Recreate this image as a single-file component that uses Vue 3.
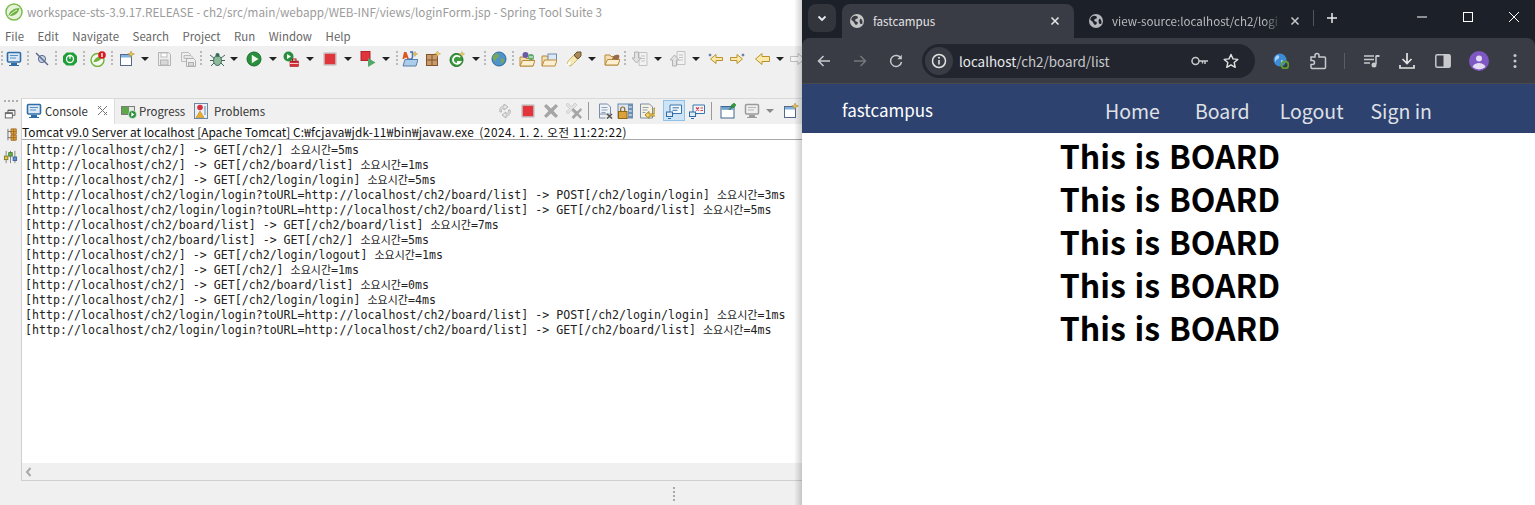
<script setup>
const I = {
  monitor: '<rect x="1.500" y="1.500" width="13" height="9.500" rx="1" fill="#dbe9f6" stroke="#2f6da8" stroke-width="1.600"/><path d="M4 4.500h8M4 7h6" stroke="#5a8fc0"/><path d="M5 12h6v2H5z" fill="#2f6da8"/><path d="M3 14.500h10" stroke="#2f6da8"/>',
  pin: '<circle cx="8" cy="8" r="3.600" fill="#c9d2e4" stroke="#56688c"/><path d="M2 2l12 12" stroke="#56688c" stroke-width="1.400"/>',
  boot: '<path d="M4.500 1.500h7l3.500 3.500v6l-3.500 3.500h-7l-3.500-3.500v-6z" fill="#1e9e36"/><circle cx="8" cy="8" r="3.500" fill="none" stroke="#fff" stroke-width="1.300"/><path d="M8 3.800v4" stroke="#fff" stroke-width="1.300"/>',
  spring: '<circle cx="7.500" cy="9" r="6.500" fill="#f5f8ee" stroke="#6fb33c" stroke-width="1.400"/><path d="M3.500 11c1-4 5-6 9-6-1 4-5 6-9 6z" fill="#6fb33c"/><circle cx="12" cy="4" r="3.800" fill="#d9191f"/><path d="M12 2v4" stroke="#fff" stroke-width="1.400"/>',
  newwin: '<rect x="1.500" y="3.500" width="11" height="11" fill="#fff" stroke="#56688c"/><rect x="2" y="4" width="10" height="2.500" fill="#7fb2dd"/><path d="M12 0l1 2.200L15.500 3l-2.500 1-1 2.300L11 4 8.700 3l2.300-.8z" fill="#e6c25a" stroke="#a88a2d" stroke-width=".5"/>',
  save: '<path d="M2.500 1.500h10l2 2v11h-12z" fill="#efefef" stroke="#b4b4b4"/><rect x="5" y="2" width="6" height="4" fill="#fff" stroke="#bdbdbd"/><rect x="4.500" y="9" width="7.500" height="5" fill="#d9d9d9" stroke="#b4b4b4"/>',
  saveall: '<path d="M1.500 1.500h7l2 2v7h-9z" fill="#efefef" stroke="#bcbcbc"/><path d="M4 4.500h7l2 2v1h-9z" fill="#e8e8e8" stroke="#bcbcbc"/><path d="M6.500 7.500h7l2 2v6h-9z" fill="#efefef" stroke="#b0b0b0"/><rect x="8.500" y="11.500" width="5" height="3.500" fill="#d9d9d9" stroke="#b0b0b0"/>',
  bug: '<ellipse cx="8.500" cy="9.500" rx="4" ry="5" fill="#8fb79a" stroke="#3a6b58"/><circle cx="8.500" cy="4" r="2" fill="#3a6b58"/><path d="M1 4l4 3M1 9.500h3.500M2 15l3-3M16 4l-4 3M16 9.500h-3.500M15 15l-3-3" stroke="#3a6b58"/>',
  run: '<circle cx="8" cy="8" r="7" fill="#2a8f3d" stroke="#1b6d30"/><path d="M5.800 3.800L12.500 8l-6.700 4.200z" fill="#f2f8ef"/>',
  runext: '<circle cx="5.500" cy="5.500" r="5" fill="#2a8f3d"/><path d="M4 3l4 2.500L4 8z" fill="#fff"/><rect x="7" y="10" width="8.500" height="5.500" fill="#d6303a" stroke="#9c1c24" stroke-width=".6"/><rect x="9.500" y="8" width="3.500" height="2.500" fill="none" stroke="#9c1c24"/><path d="M7 12.500h8.500" stroke="#f6c6c8"/>',
  stop: '<rect x="2" y="2" width="12" height="12" rx=".5" fill="#e0353b" stroke="#c7c7c7" stroke-width="1.500"/>',
  stopred: '<rect x="1" y="0.500" width="9" height="9" fill="#e0353b" stroke="#b1252b"/><path d="M8 7l7.500 4.500L8 16z" fill="#54a66a"/>',
  aj: '<path d="M1 15l2-6.500h13L14 15z" fill="#a9cdeb" stroke="#587fa6"/><path d="M2 1h2.400L7 8H5.200l-.4-1.300H2.600L2.200 8H.5z" fill="#d9561e"/><path d="M8 1h2.500v5c0 2-2 2.400-3.500 2" fill="none" stroke="#3a6fc4" stroke-width="1.500"/><path d="M13 .500l.8 1.800 1.800.7-1.800.7-.8 1.800-.8-1.800-1.800-.7 1.800-.7z" fill="#e6c25a" stroke="#a88a2d" stroke-width=".4"/>',
  pkg: '<rect x="1.500" y="3.500" width="11" height="11" fill="#c99a6b" stroke="#80552e"/><path d="M1.500 9h11M7 3.500v11" stroke="#80552e"/><path d="M12.500 0l.9 2 2.100.8-2.100.8-.9 2-.9-2-2.100-.8 2.100-.8z" fill="#f2d263" stroke="#a88a2d" stroke-width=".4"/>',
  g2: '<circle cx="7.500" cy="9" r="6.500" fill="#3a9b3d" stroke="#23702a"/><path d="M11 6.200A4 4 0 1 0 11.300 11H8" fill="none" stroke="#fff" stroke-width="1.800"/><path d="M13 .500l.8 1.800 1.800.7-1.800.7-.8 1.800-.8-1.800-1.800-.7 1.800-.7z" fill="#f2d263" stroke="#a88a2d" stroke-width=".4"/>',
  globe: '<circle cx="8" cy="8" r="7" fill="#4f93c9" stroke="#2c6a9c"/><path d="M4 3c2-1 4 0 4 2s-3 2-3 4-2 1-3-1 0-4 2-5zM10 8c2-1 3.500 0 3 2s-2 3-3 2 0-3 0-4z" fill="#75a85a"/>',
  folderg: '<path d="M1 15V6h5l1 1.500h7V15z" fill="#f6dfae" stroke="#b88a3c"/><path d="M1 15l2.500-5.500H16L14 15z" fill="#fcefcf" stroke="#b88a3c"/><circle cx="6.500" cy="4" r="3" fill="#6b5aa8"/><circle cx="12" cy="6" r="3" fill="#5aa86b"/><path d="M10 6h4" stroke="#fff"/>',
  folder: '<path d="M1 15V5h5l1 1.500h2" fill="#f6dfae" stroke="#b88a3c"/><rect x="7" y="3" width="8.500" height="6.500" fill="#dce8f4" stroke="#6c8cae"/><path d="M1 15l2.500-6H16L14 15z" fill="#fcefcf" stroke="#b88a3c"/>',
  pen: '<path d="M2.500 14.500c-2-2-1-4 1-6l4-4 4 4-4 4c-2 2-3 3-5 2z" fill="#f4e8b4" stroke="#c9b467"/><path d="M8 4l3-3 4 0v4l-3 3z" fill="#a88a5a" stroke="#6b5530"/><path d="M1.500 14.500l3-4" stroke="#fff" stroke-width="2"/>',
  folderb: '<path d="M1 14V4h5l1 1.500h7V14z" fill="#f6dfae" stroke="#b88a3c"/><path d="M1 14l2.500-5.500H16L14 14z" fill="#fcefcf" stroke="#b88a3c"/><path d="M8 8c1-4 4-5 7-4 1 2 0 4-2 5z" fill="#9a6b4a"/>',
  annDown: '<path d="M7 1.500h8v13H7z" fill="#f2f2f2" stroke="#c2c2c2"/><path d="M9 5h4M9 7.500h4M9 10h4" stroke="#c2c2c2"/><path d="M2.500 1h4v6h2.500l-4.500 5-4.500-5h2.500z" fill="#e2e2e2" stroke="#b2b2b2"/>',
  annUp: '<path d="M7 .500h8v13H7z" fill="#f2f2f2" stroke="#c2c2c2"/><path d="M9 4h4M9 6.500h4M9 9h4" stroke="#c2c2c2"/><path d="M2.500 15h4V9h2.500L4.500 4 0 9h2.500z" fill="#e2e2e2" stroke="#b2b2b2"/>',
  backStar: '<path d="M15.500 6.500H9V3.500L3.500 8 9 12.500v-3h6.500z" fill="#fbe9a8" stroke="#b9922d"/><path d="M3 2l.5 1.500L5 4l-1.500.5L3 6l-.5-1.500L1 4l1.500-.5z" fill="#2a4a8a"/>',
  fwdStar: '<path d="M.5 6.500H7V3.500L12.500 8 7 12.500v-3H.5z" fill="#fbe9a8" stroke="#b9922d"/><path d="M13 2l.5 1.500L15 4l-1.500.5L13 6l-.5-1.500L11 4l1.500-.5z" fill="#2a4a8a"/>',
  back: '<path d="M15.500 5.500H8V2.500L1.500 8 8 13.500v-3h7.500z" fill="#fbe9a8" stroke="#b9922d"/>',
  fwdGray: '<path d="M.5 5.500H8V2.500L14.500 8 8 13.500v-3H.5z" fill="#f4f4f4" stroke="#bdbdbd"/>',
  sync: '<path d="M3 9c-1-3 1-6 4-6V1l4 3-4 3V5c-2 0-3 2-2.500 4zM13 7c1 3-1 6-4 6v2l-4-3 4-3v2c2 0 3-2 2.500-4z" fill="#e4e4e4" stroke="#b5b5b5"/>',
  x: '<path d="M3.200 1L8 5.500 12.800 1 15 3.300 10.500 8l4.500 4.700-2.200 2.300L8 10.500 3.200 15 1 12.700 5.500 8 1 3.300z" fill="#a5a5a5"/>',
  xx: '<path d="M1.500 0L5.500 3.500 9 0l2 2-3.500 3.500L11 9 9 11 5.500 7.500 2 11 0 9l3.500-3.500L0 2z" fill="#e3e3e3" stroke="#bdbdbd" stroke-width=".6"/><path d="M7.200 5L11 8.500 14.800 5l1.200 2-3.500 3.500L16 14l-1.500 2-3.500-3.500L7.500 16 5.500 14 9 10.500 5.500 7z" fill="#a5a5a5"/>',
  docx: '<path d="M2.500 1h8l3 3v7h-11zM2.500 11v4h6" fill="#eef3f9" stroke="#7b8ea8"/><path d="M4.500 4.500h6M4.500 7h6M4.500 9.500h4" stroke="#8fa3bc"/><path d="M10 11l5 4.500M15 11l-5 4.500" stroke="#555" stroke-width="1.600"/>',
  lock: '<rect x="1" y="1" width="14.500" height="14" fill="#dbe6f2" stroke="#6c87a6"/><rect x="11" y="1" width="4.500" height="14" fill="#6e8fb3"/><path d="M11.800 4h3M11.800 8h3M11.800 12h3" stroke="#fff"/><rect x="1.500" y="8.500" width="8.500" height="7" fill="#dba23a" stroke="#8f6518"/><path d="M3.700 8.500V6a2 2 0 0 1 4 0v2.500" fill="none" stroke="#8f6518" stroke-width="1.200"/>',
  docarrow: '<path d="M1.500 1h9l3 3v11h-12z" fill="#f7f2df" stroke="#7b8ea8"/><path d="M3.500 4.500h6M3.500 7h5M3.500 9.500h3" stroke="#8fa3bc"/><path d="M15 5v6H10V8.500L6 12l4 3.500V13h6.500V5z" fill="#f6d76b" stroke="#a88221"/>',
  chat: '<path d="M4 2h11.500v8.500H7v1H4z" fill="#f4f8fc" stroke="#3a76ad"/><path d="M6.500 4.800h6.500M6.500 7.300h5" stroke="#3a76ad"/><rect x=".5" y="9" width="6" height="4.500" fill="#dfeaf5" stroke="#2f6da8"/><path d="M2 15.500h3" stroke="#2f6da8"/>',
  chatx: '<path d="M4 2h11.500v8.500H7v1H4z" fill="#f4f8fc" stroke="#3a76ad"/><path d="M7 4.500l3 3M10 4.500l-3 3" stroke="#d63a3f" stroke-width="1.400"/><path d="M11.500 5h2.500M11.500 7.500h2.500" stroke="#d63a3f"/><rect x=".5" y="9" width="6" height="4.500" fill="#dfeaf5" stroke="#2f6da8"/><path d="M2 15.500h3" stroke="#2f6da8"/>',
  pinwin: '<rect x="1" y="3.500" width="13" height="11.500" fill="#fff" stroke="#42648e"/><rect x="1.500" y="4" width="12" height="2.800" fill="#6f9fcb"/><path d="M9 6.500l3-3-1-1 3-2.500 2 2-2.500 3-1-1-3 3z" fill="#2e9e3a" stroke="#1d6d28" stroke-width=".5"/>',
  grayMon: '<rect x="1.500" y="1.500" width="13" height="9.500" rx="1" fill="#efefef" stroke="#9b9b9b" stroke-width="1.500"/><path d="M4 4.500h8M4 7h6" stroke="#b5b5b5"/><path d="M5 12h6v2H5z" fill="#9b9b9b"/><path d="M3 14.500h10" stroke="#9b9b9b"/>',
  progress: '<rect x=".5" y="3.500" width="13" height="8" fill="#e8e8e8" stroke="#7b7b7b"/><rect x="1" y="4" width="7" height="7" fill="#5fa64a"/><circle cx="11.500" cy="11.500" r="4" fill="#2a8f3d" stroke="#fff" stroke-width=".6"/><path d="M10.300 9.300l3.200 2.200-3.200 2.200z" fill="#fff"/>',
  problems: '<rect x="1.500" y=".5" width="13" height="15" fill="#eaf0f7" stroke="#6e87a5"/><circle cx="7" cy="4.500" r="2.800" fill="#d6303a"/><path d="M7 8l4 6.500H3z" fill="#e9ad2f" stroke="#a97c14" stroke-width=".5"/><path d="M12 3v9" stroke="#6e87a5"/>',
  rail1: '<rect x="1.500" y="6.500" width="8" height="6" fill="#fff" stroke="#555"/><path d="M4.500 6.500v-3h8v6h-3" fill="none" stroke="#555"/><path d="M4.500 4h8M2 7.500h7" stroke="#555"/>',
  rail2: '<path d="M4.500 1v13M4.500 4H8M4.500 11H8" stroke="#666" fill="none"/><path d="M8 1h6v6H8zM8 8h6v6H8z" fill="#e6a246" stroke="#9c6b1f"/><path d="M11 1v13M8 4h6M8 11h6" stroke="#9c6b1f"/>',
  rail3: '<path d="M3 1v14M8 1v14M13 1v14" stroke="#7a7a7a"/><rect x="1" y="7" width="4" height="4" fill="#e5c43e" stroke="#7a7a2a"/><rect x="6" y="3" width="4" height="4" fill="#6db24a" stroke="#3e7a25"/><rect x="11" y="8" width="4" height="4" fill="#5d8fd0" stroke="#305d99"/>'
}

// Items are listed with the x of their centre; the left margins follow from those.
const widths = { g: 2, d: 8, s: 1 }
function place(list, origin) {
  let right = origin
  return list.map(([k, c, on]) => {
    const w = on ? 22 : widths[k] || 16
    const left = c - w / 2
    const ml = left - right
    right = left + w
    return { k, ml, on }
  })
}

const mainBar = place([
  ['g', 2], ['monitor', 14], ['g', 28], ['pin', 42], ['g', 56], ['boot', 70], ['g', 84], ['spring', 98], ['g', 112],
  ['newwin', 127], ['d', 145], ['save', 164], ['saveall', 188], ['g', 201], ['bug', 217], ['d', 234], ['run', 254], ['d', 273],
  ['runext', 291], ['d', 310], ['stop', 330], ['d', 348], ['stopred', 368], ['d', 386], ['g', 397],
  ['aj', 410], ['pkg', 433], ['g2', 457], ['d', 476], ['g', 485], ['globe', 499], ['g', 513], ['folderg', 527], ['folder', 549],
  ['pen', 574], ['d', 592], ['folderb', 612], ['g', 625], ['annDown', 640], ['d', 658], ['annUp', 678], ['d', 696],
  ['backStar', 715], ['fwdStar', 738], ['back', 762], ['d', 780], ['fwdGray', 798]
], 0)

const viewBar = place([
  ['sync', 505], ['stop', 528], ['x', 551], ['xx', 574], ['s', 588], ['docx', 605], ['lock', 625], ['docarrow', 647],
  ['chat', 674, true], ['chatx', 697], ['s', 711], ['pinwin', 728], ['grayMon', 752], ['d', 770], ['newwin', 791]
], 505 - 8)

const menus = ['File', 'Edit', 'Navigate', 'Search', 'Project', 'Run', 'Window', 'Help']

const K = '소요시간'
const L = 'http://localhost/ch2/'
const LL = 'http://localhost/ch2/login/login?toURL=http://localhost/ch2/board/list'
const BL = 'http://localhost/ch2/board/list'
const lines = [
  `[${L}] -> GET[/ch2/] ${K}=5ms`,
  `[${L}] -> GET[/ch2/board/list] ${K}=1ms`,
  `[${L}] -> GET[/ch2/login/login] ${K}=5ms`,
  `[${LL}] -> POST[/ch2/login/login] ${K}=3ms`,
  `[${LL}] -> GET[/ch2/board/list] ${K}=5ms`,
  `[${BL}] -> GET[/ch2/board/list] ${K}=7ms`,
  `[${BL}] -> GET[/ch2/] ${K}=5ms`,
  `[${L}] -> GET[/ch2/login/logout] ${K}=1ms`,
  `[${L}] -> GET[/ch2/] ${K}=1ms`,
  `[${L}] -> GET[/ch2/board/list] ${K}=0ms`,
  `[${L}] -> GET[/ch2/login/login] ${K}=4ms`,
  `[${LL}] -> POST[/ch2/login/login] ${K}=1ms`,
  `[${LL}] -> GET[/ch2/board/list] ${K}=4ms`
].map((s) => s.split(K))

const boards = [1, 2, 3, 4, 5]
const navs = ['Home', 'Board', 'Logout', 'Sign in']
</script>

<template>
  <div class="root">
    <section class="ecl">
      <header class="ecl-title">
        <svg class="logo" width="18" height="18" viewBox="0 0 18 18">
          <circle cx="9" cy="9" r="8" fill="#e8f1dc" stroke="#7dbb4f" stroke-width="1.500" />
          <path d="M3.500 13c.5-5 5.500-8 11-8-1 5.500-5.500 8.500-11 8z" fill="#6db33f" />
          <path d="M4 13.500c2-3 5-5 8-6.500" stroke="#f2f7ea" fill="none" />
        </svg>
        <span>workspace-sts-3.9.17.RELEASE - ch2/src/main/webapp/WEB-INF/views/loginForm.jsp - Spring Tool Suite 3</span>
      </header>
      <nav class="ecl-menu">
        <span v-for="m in menus" :key="m">{{ m }}</span>
      </nav>
      <div class="bar">
        <template v-for="(b, n) in mainBar" :key="n">
          <i v-if="b.k === 'g'" class="grip" :style="{ marginLeft: b.ml + 'px' }"></i>
          <i v-else-if="b.k === 'd'" class="tri" :style="{ marginLeft: b.ml + 'px' }"></i>
          <svg v-else class="ic" :style="{ marginLeft: b.ml + 'px' }" width="16" height="16" viewBox="0 0 16 16" v-html="I[b.k]"></svg>
        </template>
      </div>
      <div class="work">
        <aside class="rail">
          <i class="hgrip"></i>
          <svg width="14" height="14" viewBox="0 0 16 16" v-html="I.rail1"></svg>
          <svg width="14" height="16" viewBox="0 0 16 16" v-html="I.rail2"></svg>
          <svg class="r3" width="15" height="14" viewBox="0 0 16 16" v-html="I.rail3"></svg>
        </aside>
        <div class="panel">
          <div class="tabs">
            <div class="tab on">
              <svg width="16" height="16" viewBox="0 0 16 16" v-html="I.monitor"></svg>
              <span>Console</span>
              <svg class="cl" width="11" height="11" viewBox="0 0 11 11"><path d="M1 1l9 9M10 1l-9 9M1 4l3-3M7 10l3-3" stroke="#777" fill="none" /></svg>
            </div>
            <div class="tab">
              <svg width="16" height="16" viewBox="0 0 16 16" v-html="I.progress"></svg>
              <span>Progress</span>
            </div>
            <div class="tab">
              <svg width="16" height="16" viewBox="0 0 16 16" v-html="I.problems"></svg>
              <span>Problems</span>
            </div>
            <div class="viewbar">
              <template v-for="(v, n) in viewBar" :key="n">
                <i v-if="v.k === 's'" class="vsep" :style="{ marginLeft: v.ml + 'px' }"></i>
                <i v-else-if="v.k === 'd'" class="tri gray" :style="{ marginLeft: v.ml + 'px' }"></i>
                <span v-else class="vslot" :class="{ sel: v.on }" :style="{ marginLeft: v.ml + 'px' }">
                  <svg width="16" height="16" viewBox="0 0 16 16" v-html="I[v.k]"></svg>
                </span>
              </template>
            </div>
          </div>
          <div class="info"><span class="i1">Tomcat v9.0 Server at localhost [Apache Tomcat] </span><span class="i2">C:₩fcjava₩jdk-11₩bin₩javaw.exe</span>&nbsp;&nbsp;<span class="i3">(2024. 1. 2. 오전 11:22:22)</span></div>
          <div class="console">
            <div v-for="(p, n) in lines" :key="n" class="ln">{{ p[0] }}<span class="ko">소요시간</span>{{ p[1] }}</div>
          </div>
          <div class="hscroll">
            <svg width="8" height="10" viewBox="0 0 8 10"><path d="M5.500 1L2 5l3.500 4" stroke="#a9a9a9" stroke-width="2" fill="none" /></svg>
          </div>
        </div>
      </div>
      <div class="foot"><i class="fgrip"></i></div>
      <div class="shade"></div>
    </section>

    <section class="chrome">
      <div class="strip">
        <button class="tablist">
          <svg width="12" height="12" viewBox="0 0 12 12"><path d="M2.500 4.500L6 8l3.500-3.500" stroke="#e8eaed" stroke-width="1.800" fill="none" /></svg>
        </button>
        <div class="ctab active">
          <svg class="glb" width="14" height="14" viewBox="0 0 16 16"><circle cx="8" cy="8" r="8" fill="#c4c7c5" /><path d="M3 3c3-2 6-1 6 1 0 2-3 1-3 3s3 1 3 3-2 3-3 2-1-3-3-4-2-3 0-5zM12 5c2 1 3 4 2 6-1 1-3 0-3-2s0-3 1-4z" fill="#3a3c45" /></svg>
          <span class="ctitle">fastcampus</span>
          <svg class="tx" width="10" height="10" viewBox="0 0 10 10"><path d="M1.500 1.500l7 7M8.500 1.500l-7 7" stroke="#e8eaed" stroke-width="1.500" /></svg>
        </div>
        <div class="ctab">
          <svg class="glb" width="14" height="14" viewBox="0 0 16 16"><circle cx="8" cy="8" r="8" fill="#b5b7bb" /><path d="M3 3c3-2 6-1 6 1 0 2-3 1-3 3s3 1 3 3-2 3-3 2-1-3-3-4-2-3 0-5zM12 5c2 1 3 4 2 6-1 1-3 0-3-2s0-3 1-4z" fill="#1c2028" /></svg>
          <span class="ctitle dim">view-source:localhost/ch2/logi</span>
          <svg class="tx" width="10" height="10" viewBox="0 0 10 10"><path d="M1.500 1.500l7 7M8.500 1.500l-7 7" stroke="#c7c9cc" stroke-width="1.500" /></svg>
        </div>
        <i class="tsep"></i>
        <svg class="plus" width="12" height="12" viewBox="0 0 12 12"><path d="M6 1v10M1 6h10" stroke="#e8eaed" stroke-width="1.500" /></svg>
        <div class="winctl">
          <svg width="46" height="12" viewBox="0 0 46 12"><path d="M18 6h10" stroke="#fff" /></svg>
          <svg width="46" height="12" viewBox="0 0 46 12"><rect x="18.500" y="1.500" width="9" height="9" fill="none" stroke="#fff" /></svg>
          <svg width="46" height="12" viewBox="0 0 46 12"><path d="M18 1l10 10M28 1L18 11" stroke="#fff" /></svg>
        </div>
      </div>
      <div class="ctool">
        <svg width="16" height="16" viewBox="0 0 16 16"><path d="M14 8H3M7.500 3L2.500 8l5 5" stroke="#c7c9cc" stroke-width="1.500" fill="none" /></svg>
        <svg class="fwd" width="16" height="16" viewBox="0 0 16 16"><path d="M2 8h11M8.500 3l5 5-5 5" stroke="#75777c" stroke-width="1.500" fill="none" /></svg>
        <svg class="rld" width="16" height="16" viewBox="0 0 16 16"><path d="M13 5.500A5.500 5.500 0 1 0 13.500 9" stroke="#c7c9cc" stroke-width="1.500" fill="none" /><path d="M13.800 1.800v4.500H9.300z" fill="#c7c9cc" /></svg>
        <div class="omni">
          <span class="inf"><svg width="16" height="16" viewBox="0 0 16 16"><circle cx="8" cy="8" r="6.500" stroke="#e3e3e3" stroke-width="1.500" fill="none" /><path d="M8 7v4.500" stroke="#e3e3e3" stroke-width="1.600" /><circle cx="8" cy="4.800" r="1" fill="#e3e3e3" /></svg></span>
          <span class="url">localhost<span class="urlp">/ch2/board/list</span></span>
          <svg class="key" width="18" height="10" viewBox="0 0 18 10"><circle cx="4.500" cy="5" r="3.500" stroke="#c7c9cc" stroke-width="1.500" fill="none" /><path d="M8 5h9M14 5v3M11.500 5v2.500" stroke="#c7c9cc" stroke-width="1.500" fill="none" /></svg>
          <svg class="star" width="16" height="16" viewBox="0 0 16 16"><path d="M8 1.500l2 4.400 4.800.5-3.600 3.200 1 4.700L8 11.900l-4.200 2.400 1-4.700L1.200 6.400 6 5.900z" stroke="#e3e3e3" stroke-width="1.400" fill="none" stroke-linejoin="round" /></svg>
        </div>
        <svg class="ex1" width="16" height="16" viewBox="0 0 16 16"><circle cx="7" cy="7" r="6.500" fill="#3d8ad6" /><path d="M3 3c2-2 4 0 3 2s-3 1-3 3-1 0-1-1 0-3 1-4zM8 7c2 0 3 1 2 3s-2 2-2 0z" fill="#a8d2f5" /><circle cx="12" cy="12" r="3.500" fill="none" stroke="#5f9e30" stroke-width="2" /></svg>
        <svg class="ex2" width="18" height="18" viewBox="0 0 18 18"><path d="M2 5h4V3.500a2 2 0 0 1 4 0V5h5.500a1 1 0 0 1 1 1v9.500a1 1 0 0 1-1 1H3a1 1 0 0 1-1-1v-3h1.500a2 2 0 0 0 0-4H2z" stroke="#c7c9cc" stroke-width="1.500" fill="none" /></svg>
        <i class="csep"></i>
        <svg class="ex3" width="16" height="14" viewBox="0 0 16 14"><path d="M0 2h10M0 5.500h10M0 9h6" stroke="#c7c9cc" stroke-width="1.500" /><path d="M12 1.500V10" stroke="#c7c9cc" stroke-width="1.500" /><path d="M12 1l3.500 0v2l-3.500 0z" fill="#c7c9cc" /><circle cx="10" cy="11" r="2.500" fill="#c7c9cc" /></svg>
        <svg class="ex4" width="16" height="18" viewBox="0 0 16 18"><path d="M8 1v10M3.500 7L8 11.500 12.500 7" stroke="#e3e3e3" stroke-width="1.700" fill="none" /><path d="M1 13v3h14v-3" stroke="#e3e3e3" stroke-width="1.700" fill="none" /></svg>
        <svg class="ex5" width="16" height="14" viewBox="0 0 16 14"><rect x=".8" y=".8" width="14.400" height="12.400" rx="1.500" stroke="#c7c9cc" stroke-width="1.500" fill="none" /><rect x="8.500" y="1" width="6.500" height="12" fill="#c7c9cc" /></svg>
        <svg class="ava" width="20" height="20" viewBox="0 0 20 20"><circle cx="10" cy="10" r="10" fill="#7e57c2" /><circle cx="10" cy="7.500" r="3" fill="#e4dbf5" /><path d="M3.500 16c1-3 4-4 6.500-4s5.500 1 6.500 4a10 10 0 0 1-13 0z" fill="#e4dbf5" /></svg>
        <svg class="more" width="4" height="16" viewBox="0 0 4 16"><circle cx="2" cy="2.500" r="1.500" fill="#c7c9cc" /><circle cx="2" cy="8" r="1.500" fill="#c7c9cc" /><circle cx="2" cy="13.500" r="1.500" fill="#c7c9cc" /></svg>
      </div>
      <main class="page">
        <nav class="site">
          <a class="brand">fastcampus</a>
          <ul class="links">
            <li v-for="n in navs" :key="n">{{ n }}</li>
          </ul>
        </nav>
        <h1 v-for="b in boards" :key="b" class="hd">This is BOARD</h1>
      </main>
    </section>
  </div>
</template>

<style scoped>
.root { display: flex; width: 1535px; height: 505px; overflow: hidden; font-family: "Noto Sans CJK KR", "Noto Sans", sans-serif; }
.ecl { position: relative; width: 802px; flex: none; background: #f0f0f0; display: flex; flex-direction: column; overflow: hidden; }
.ecl-title { height: 23px; background: #fff; display: flex; align-items: center; gap: 4px; padding-left: 5px; font-size: 11.720px; color: #9b9b9b; white-space: nowrap; }
.logo { flex: none; }
.ecl-menu { height: 23px; box-sizing: border-box; padding: 3px 0 0 5px; background: #fff; display: flex; gap: 13.650px; align-items: center; font-size: 11.400px; color: #666; }
.bar { height: 24px; display: flex; align-items: center; padding-top: 2px; box-sizing: border-box; white-space: nowrap; }
.ic { flex: none; }
.grip { flex: none; width: 2px; height: 16px; background: repeating-linear-gradient(#b9b9b9 0 2px, transparent 2px 4px); }
.tri { flex: none; width: 0; height: 0; border: 4px solid transparent; border-top: 4px solid #222; border-bottom: 0; }
.tri.gray { border-top-color: #8a8a8a; }
.work { flex: none; height: 383px; margin-top: 28px; display: flex; }
.rail { width: 21px; flex: none; display: flex; flex-direction: column; align-items: center; gap: 6px; padding-top: 2px; box-sizing: border-box; }
.r3 { margin-top: 1px; }
.hgrip { width: 14px; height: 2px; background: repeating-linear-gradient(90deg, #b0b0b0 0 2px, transparent 2px 4px); margin-bottom: -1px; }
.panel { flex: 1; display: flex; flex-direction: column; min-width: 0; border: 1px solid #cfcfcf; border-right: 0; border-top: 1px solid #d9d9d9; }
.tabs { height: 25px; display: flex; align-items: center; background: #f0f0f0; font-size: 11.400px; color: #333; }
.tab { height: 25px; display: flex; align-items: center; gap: 2px; padding-bottom: 2px; box-sizing: border-box; }
.tab.on { background: #fff; width: 93px; gap: 3px; padding-left: 4px; border-right: 1px solid #dcdcdc; }
.tab:nth-child(2) { margin-left: 6px; }
.tab:nth-child(3) { margin-left: 8px; gap: 5px; }
.cl { margin-left: 6px; }
.viewbar { position: absolute; right: 3px; top: 98px; display: flex; align-items: center; height: 25px; }
.vslot { display: flex; align-items: center; justify-content: center; height: 21px; flex: none; box-sizing: border-box; }
.vslot.sel { width: 22px; background: #cde4f7; border: 1px solid #90c1e8; }
.vsep { width: 1px; height: 18px; background: #9a9a9a; flex: none; }
.info { height: 15px; background: #fff; border-bottom: 1px solid #a8a8a8; font-size: 11.800px; line-height: 15px; color: #111; white-space: pre; }
.i1 { font-size: 11.900px; }
.i2 { letter-spacing: .25px; }
.i3 { letter-spacing: .5px; }
.console { height: 324px; box-sizing: border-box; padding: 2px 0 0 3px; background: #fff; overflow: hidden; }
.ln { height: 15px; line-height: 15px; font-family: "DejaVu Sans Mono", monospace; font-size: 11.620px; color: #222; white-space: pre; }
.ko { font-family: "Noto Sans CJK KR", sans-serif; font-size: 11px; }
.hscroll { height: 17px; display: flex; align-items: center; padding-left: 3px; background: #f0f0f0; }
.foot { flex: 1; position: relative; }
.fgrip { position: absolute; left: 673px; top: 6px; width: 2px; height: 15px; background: repeating-linear-gradient(#a8a8a8 0 2px, transparent 2px 4px); }
.shade { position: absolute; top: 0; right: 0; bottom: 0; width: 8px; background: linear-gradient(90deg, rgba(0, 0, 0, 0), rgba(0, 0, 0, .18)); pointer-events: none; }

.chrome { flex: 1; display: flex; flex-direction: column; min-width: 0; background: #1c2028; }
.strip { height: 38px; position: relative; display: flex; align-items: flex-start; background: #1c2028; padding: 4px 0 0 6px; box-sizing: border-box; }
.tablist { width: 28px; height: 28px; padding: 0; border: 0; border-radius: 8px; background: #33353d; display: flex; align-items: center; justify-content: center; flex: none; }
.ctab { width: 232px; height: 34px; margin-left: 6px; display: flex; align-items: center; padding: 0 14px 0 8px; box-sizing: border-box; border-radius: 8px 8px 0 0; flex: none; }
.ctab.active { background: #3a3c45; }
.ctab + .ctab { margin-left: 0; width: 240px; padding: 0 14px 0 15px; }
.glb { flex: none; }
.ctitle { flex: 1; min-width: 0; margin-left: 9px; font-size: 11.600px; color: #e3e3e3; white-space: nowrap; }
.ctitle.dim { color: #b9bbbe; -webkit-mask-image: linear-gradient(90deg, #000 90%, transparent); mask-image: linear-gradient(90deg, #000 90%, transparent); }
.tx { flex: none; margin-left: 8px; }
.tsep { width: 1px; height: 16px; background: #53555c; margin: 6px 0 0 -1px; flex: none; }
.plus { margin: 8px 0 0 12px; flex: none; }
.winctl { position: absolute; right: -2px; top: 11px; display: flex; }
.ctool { height: 46px; background: #3a3c45; border-radius: 8px 8px 0 0; box-sizing: border-box; display: flex; align-items: center; padding-left: 14px; border-bottom: 1px solid #4a4a4e; }
.fwd { margin-left: 20px; }
.rld { margin-left: 20px; }
.omni { width: 333px; height: 34px; margin-left: 18px; border-radius: 17px; background: #22252e; display: flex; align-items: center; padding-left: 3px; box-sizing: border-box; flex: none; }
.inf { width: 28px; height: 28px; border-radius: 50%; background: #3a3c45; display: flex; align-items: center; justify-content: center; flex: none; }
.url { margin-left: 6px; font-size: 13.400px; color: #e8eaed; flex: 1; }
.urlp { color: #c7c9cc; }
.star { margin: 0 16px 0 14px; }
.ex1 { margin-left: 18px; }
.ex2 { margin-left: 20px; }
.csep { width: 1px; height: 16px; background: #5a5c63; margin-left: 17px; flex: none; }
.ex3 { margin-left: 19px; }
.ex4 { margin-left: 19px; }
.ex5 { margin-left: 20px; }
.ava { margin-left: 18px; }
.more { margin-left: 24px; }
.page { flex: 1; background: #fff; text-align: center; overflow: hidden; }
.site { height: 49px; margin-bottom: 1px; background: #2e4270; display: flex; align-items: center; padding-left: 40px; }
.brand { font-size: 17px; padding-top: 2px; color: #fff; width: 263px; flex: none; text-align: left; }
.links { list-style: none; margin: 0; padding: 3px 0 0; display: flex; font-size: 19.500px; color: #dfe1e6; }
.links li:nth-child(2) { margin-left: 35px; }
.links li:nth-child(3) { margin-left: 30px; }
.links li:nth-child(4) { margin-left: 27px; }
.hd { margin: 0; padding-left: 3px; font-size: 32px; line-height: 43px; font-weight: 700; color: #000; word-spacing: 1.500px; }
</style>
